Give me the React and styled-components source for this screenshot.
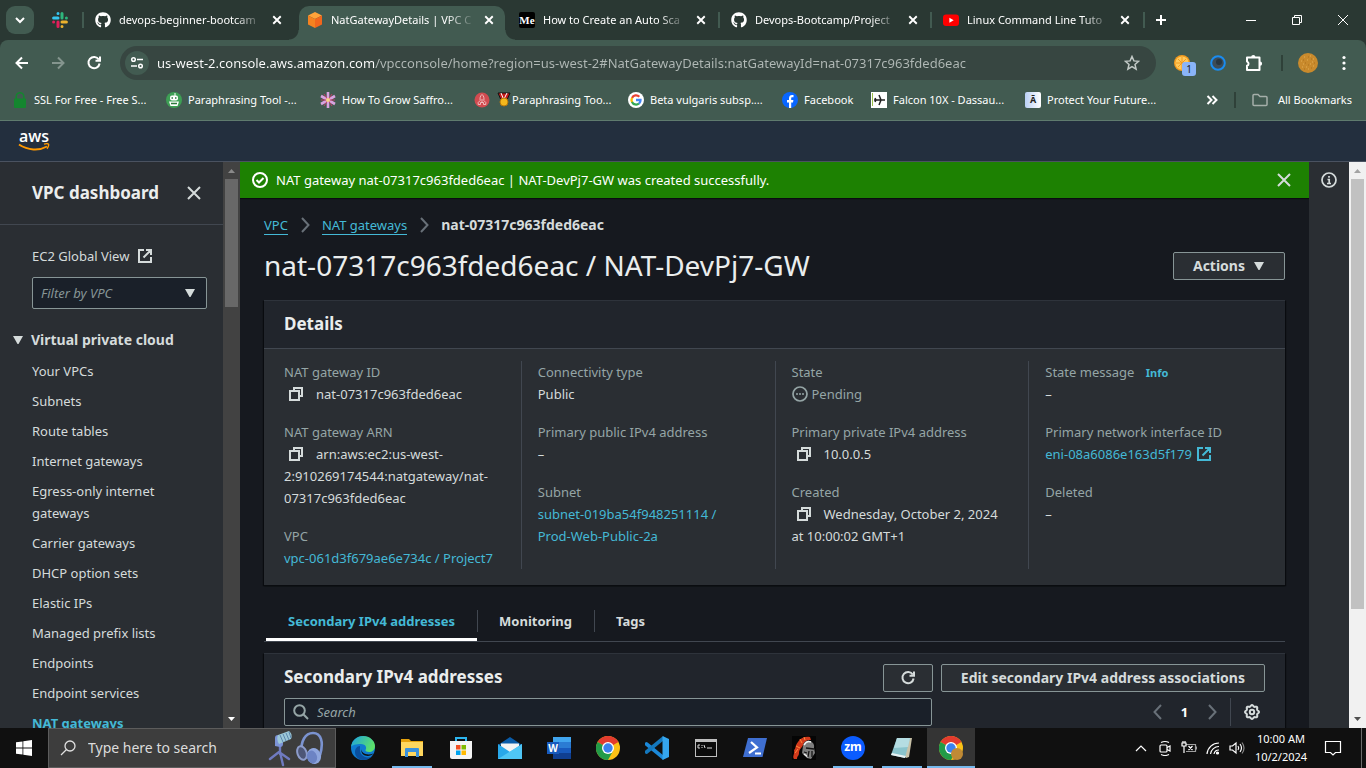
import React from 'react';
import styled, { createGlobalStyle, css } from 'styled-components';
import { FaGithub } from 'react-icons/fa6';

const ui = '"Noto Sans", "Open Sans", sans-serif';
const ember = '"Noto Sans", "Open Sans", sans-serif';

const Global = createGlobalStyle`
  *, *::before, *::after { box-sizing: border-box; }
  body { margin: 0; background: #16191f; font-family: ${ember}; overflow: hidden; }
  button, input, select { font: inherit; color: inherit; margin: 0; }
  button { padding: 0; border: 0; background: none; display: inline-flex; align-items: center; justify-content: center; }
  h1, h2, ul, dl, dd, dt, ol { margin: 0; padding: 0; }
  ul, ol { list-style: none; }
  svg { display: block; flex: none; }
`;

const Screen = styled.div`
  height: 100vh;
  display: flex;
  flex-direction: column;
  overflow: hidden;
`;

/* ---------- browser window ---------- */

const TabStrip = styled.div`
  height: 40px;
  flex: none;
  display: flex;
  align-items: center;
  background: #2a3833;
  color: #fff;
  font: 11px/16px ${ui};
`;

const TabSearch = styled.button`
  width: 28px;
  height: 28px;
  margin: 0 18px 0 6px;
  border-radius: 9px;
  background: #425b51;
`;

const PinnedTab = styled.button`
  width: 16px;
  height: 16px;
  margin-right: 16px;
`;

const Tab = styled.div`
  width: 212px;
  height: 40px;
  flex: none;
  display: flex;
  align-items: center;
  gap: 8px;
  padding: 0 13px 0 11px;
  position: relative;
  z-index: ${p => (p.$active ? 1 : 0)};
  ${p => p.$divided && css`
    &::before {
      content: '';
      position: absolute;
      left: -2px;
      top: 12px;
      width: 2px;
      height: 16px;
      background: #425b51;
    }
  `}
  ${p => p.$active && css`
    &::before {
      content: '';
      position: absolute;
      z-index: -1;
      inset: 6px 3px 0;
      border-radius: 10px 10px 0 0;
      background: #425b51;
    }
    &::after {
      content: '';
      position: absolute;
      z-index: -1;
      left: -7px;
      right: -7px;
      bottom: 0;
      height: 10px;
      background:
        radial-gradient(circle at 0 0, transparent 9px, #425b51 10px) left / 10px 10px no-repeat,
        radial-gradient(circle at 100% 0, transparent 9px, #425b51 10px) right / 10px 10px no-repeat;
    }
  `}
`;

const TabTitle = styled.span`
  flex: 1;
  min-width: 0;
  overflow: hidden;
  white-space: nowrap;
  mask-image: linear-gradient(to right, #000 calc(100% - 28px), transparent);
`;

const TabClose = styled.button`
  width: 12px;
  height: 16px;
`;

const NewTab = styled.button`
  width: 34px;
  height: 28px;
  position: relative;
  &::before {
    content: '';
    position: absolute;
    left: -1px;
    top: 6px;
    width: 2px;
    height: 16px;
    background: #425b51;
  }
`;

const WindowControls = styled.div`
  margin-left: auto;
  display: flex;
  button { width: 46px; height: 40px; }
`;

const ToolbarBack = styled.div`
  flex: none;
  background: #2a3833;
`;

const Toolbar = styled.div`
  height: 46px;
  display: flex;
  align-items: center;
  padding: 0 4px;
  border-radius: 8px 8px 0 0;
  background: #425b51;
  color: #fff;
`;

const ToolButton = styled.button`
  width: 36px;
  height: 34px;
  flex: none;
  position: relative;
  color: ${p => (p.$dim ? '#84958e' : '#fff')};
`;

const AddressBar = styled.label`
  flex: 1;
  height: 34px;
  margin: 0 8px;
  padding: 0 16px 0 5px;
  display: flex;
  align-items: center;
  gap: 8px;
  border-radius: 17px;
  background: #374641;
  > svg { color: #c3cac7; }
`;

const SiteInfo = styled.button`
  width: 24px;
  height: 24px;
  flex: none;
  border-radius: 12px;
  background: #425b51;
`;

const UrlInput = styled.input`
  flex: 1;
  min-width: 0;
  height: 22px;
  padding: 0;
  border: 0;
  outline: 0;
  font: 13px/22px ${ui};
  color: transparent;
  background: linear-gradient(to right, #fff 217px, #b1b9b6 217px);
  background-clip: text;
  -webkit-background-clip: text;
`;

const Count = styled.span`
  position: absolute;
  left: 18px;
  top: 16px;
  width: 14px;
  height: 14px;
  border-radius: 3px;
  background: #8ab4f8;
  color: #1b1b1b;
  font: 10px/14px ${ui};
  text-align: center;
`;

const Divider = styled.span`
  width: 2px;
  height: 16px;
  flex: none;
  margin: ${p => p.$margin || '0'};
  background: #2f4139;
`;

const Bookmarks = styled.nav`
  height: 35px;
  flex: none;
  display: flex;
  align-items: center;
  padding: 0 14px 6px 12px;
  border-bottom: 1px solid #5f7b6e;
  background: #425b51;
  color: #fff;
  font: 11px/16px ${ui};
  white-space: nowrap;
`;

const Bookmark = styled.a`
  display: flex;
  align-items: center;
  gap: ${p => p.$gap ?? 6}px;
  width: ${p => (p.$w ? p.$w + 'px' : 'auto')};
  flex: none;
  color: inherit;
  text-decoration: none;
`;

const MoreButton = styled.button`
  margin-left: auto;
  width: 24px;
  height: 24px;
`;

/* ---------- console ---------- */

const AwsHeader = styled.header`
  height: 41px;
  flex: none;
  display: flex;
  align-items: center;
  padding: 0 18px 2px;
  border-bottom: 1px solid #4a5260;
  background: #232f3e;
`;

const Console = styled.div`
  flex: 1;
  min-height: 0;
  display: flex;
  color: #d5dbdb;
  font: 13px/22px ${ember};
`;

const Sidebar = styled.aside`
  width: 223px;
  flex: none;
  overflow: hidden;
  background: #2a2e33;
`;

const SidebarHeader = styled.div`
  height: 63px;
  display: flex;
  align-items: center;
  justify-content: space-between;
  padding: 0 21px 0 32px;
  border-bottom: 1px solid #414750;
  h2 { font: 700 17px/22px ${ember}; color: #eaeded; }
`;

const SidebarBody = styled.div`
  padding: 20px 16px 0 32px;
`;

const GlobalView = styled.a`
  display: flex;
  align-items: center;
  gap: 8px;
  color: inherit;
  text-decoration: none;
`;

const FilterBox = styled.label`
  display: grid;
  align-items: center;
  margin: 10px 0 20px;
  > * { grid-area: 1 / 1; }
  > svg { justify-self: end; margin-right: 11px; pointer-events: none; }
`;

const FilterSelect = styled.select`
  appearance: none;
  width: 100%;
  height: 32px;
  padding: 0 8px;
  border: 1px solid #879596;
  border-radius: 2px;
  background: #1a2029;
  color: #879596;
  font-style: italic;
`;

const SectionToggle = styled.button`
  margin-left: -20px;
  gap: 7px;
  && { font-size: 14px; font-weight: 700; }
`;

const NavList = styled.ul`
  display: flex;
  flex-direction: column;
  gap: 8px;
  margin-top: 8px;
  max-width: 150px;
`;

const NavLink = styled.a`
  display: block;
  color: ${p => (p.$current ? '#44b9d6' : 'inherit')};
  font-weight: ${p => (p.$current ? 700 : 400)};
  text-decoration: none;
`;

const ScrollTrack = styled.div`
  width: 17px;
  flex: none;
  display: flex;
  flex-direction: column;
  align-items: center;
  background: ${p => (p.$light ? '#f1f1f1' : '#424242')};
  svg { height: 17px; }
`;

const ScrollThumb = styled.div`
  width: 13px;
  flex: 0 1 ${p => p.$share};
  margin-bottom: auto;
  background: ${p => (p.$light ? '#c1c1c1' : '#686868')};
`;

const Main = styled.main`
  flex: 1;
  min-width: 0;
  overflow: hidden;
  background: #16191f;
`;

const Flash = styled.div`
  height: 36px;
  display: flex;
  align-items: center;
  gap: 8px;
  padding: 0 17px 0 12px;
  background: #1d8102;
  color: #fff;
  box-shadow: 0 1px 1px #0a0c10;
  button { margin-left: auto; color: #d5dbdb; }
`;

const Page = styled.div`
  padding: 16px 24px 0;
`;

const Crumbs = styled.ol`
  display: flex;
  align-items: center;
  gap: 9px;
  li { display: flex; align-items: center; gap: 9px; }
  svg { color: #687078; }
  strong { font-size: 14px; font-weight: 700; }
`;

const CrumbLink = styled.a`
  line-height: 18px;
  border-bottom: 1px solid #44b9d6;
  color: #44b9d6;
  text-decoration: none;
`;

const TitleRow = styled.div`
  display: flex;
  align-items: center;
  justify-content: space-between;
  margin: 12px 0 16px;
  h1 { padding-bottom: 2px; font: 400 28px/34px ${ember}; color: #eaeded; }
`;

const Button = styled.button`
  && {
    height: 28px;
    gap: 8px;
    padding: 0 ${p => (p.$icon ? 16 : 19)}px;
    border: 1px solid #879596;
    border-radius: 2px;
    background: #2a2e33;
    font-size: 14px;
    font-weight: 700;
    color: #d5dbdb;
  }
`;

const Card = styled.section`
  border-top: 1px solid #2e333b;
  background: ${p => (p.$plain ? '#21252c' : '#2a2e33')};
  box-shadow: 0 1px 1px #0a0c10, 1px 1px 1px #0a0c10, -1px 1px 1px #0a0c10;
`;

const CardHeader = styled.div`
  height: ${p => (p.$plain ? 44 : 48)}px;
  display: flex;
  align-items: center;
  gap: 8px;
  padding: ${p => (p.$plain ? 4 : 0)}px 20px 0;
  border-bottom: ${p => (p.$plain ? 0 : '1px solid #414750')};
  background: #21252c;
  h2 { margin-right: auto; padding-bottom: 2px; font: 700 17px/22px ${ember}; color: #eaeded; }
`;

const Columns = styled.div`
  display: grid;
  grid-template-columns: repeat(4, 1fr);
  padding: 12px 3px 16px;
`;

const Column = styled.dl`
  display: flex;
  flex-direction: column;
  gap: 16px;
  padding: 0 16px;
  border-left: 1px solid #414750;
  &:first-child { border-left-color: transparent; }
  dt { color: #95a5a6; }
`;

const Copy = styled.button`
  vertical-align: -3px;
  margin: 0 12px 0 4px;
`;

const Link = styled.a`
  color: #44b9d6;
  text-decoration: none;
  svg { display: inline-block; vertical-align: -3px; margin-left: 4px; }
`;

const Unbroken = styled.span`
  white-space: nowrap;
`;

const InfoLink = styled.a`
  margin-left: 8px;
  color: #44b9d6;
  font-size: 11px;
  line-height: 16px;
  font-weight: 700;
  text-decoration: none;
`;

const Status = styled.span`
  display: flex;
  align-items: center;
  gap: 4px;
  color: #95a5a6;
`;

const Tabs = styled.div`
  display: flex;
  margin: 16px 0 11px;
  padding-left: 2px;
  border-bottom: 1px solid #414750;
`;

const PageTab = styled.button`
  && {
    height: 40px;
    position: relative;
    padding: 2px 22px 0;
    font-weight: 700;
    color: ${p => (p.$active ? '#44b9d6' : '#d5dbdb')};
    border-bottom: 3px solid ${p => (p.$active ? '#fff' : 'transparent')};
  }
  &:not(:last-child)::after {
    content: '';
    position: absolute;
    right: -1px;
    top: 9px;
    width: 1px;
    height: 22px;
    background: #414750;
  }
`;

const Filters = styled.div`
  display: flex;
  align-items: center;
  justify-content: space-between;
  padding: 0 12px 20px 20px;
`;

const SearchBox = styled.label`
  width: 66%;
  max-width: 648px;
  height: 28px;
  display: flex;
  align-items: center;
  gap: 8px;
  padding: 0 8px;
  border: 1px solid #879596;
  border-radius: 2px;
  background: #1a2029;
  color: #95a5a6;
  input {
    flex: 1;
    padding: 0;
    border: 0;
    outline: 0;
    background: none;
  }
  input::placeholder { color: #95a5a6; font-style: italic; }
`;

const Pager = styled.div`
  display: flex;
  align-items: center;
  button { width: 27px; height: 28px; color: #687078; }
  button[aria-current] { color: #fff; font-weight: 700; }
  button:last-child { width: 43px; margin-left: 5px; color: #d5dbdb; border-left: 1px solid #414750; }
`;

const HelpRail = styled.aside`
  width: 40px;
  flex: none;
  display: flex;
  justify-content: center;
  padding-top: 10px;
  align-items: flex-start;
  background: #2a2e33;
  color: #d5dbdb;
`;

/* ---------- desktop taskbar ---------- */

const Taskbar = styled.footer`
  height: 40px;
  flex: none;
  display: flex;
  align-items: center;
  background: #101010;
  color: #fff;
`;

const Start = styled.button`
  width: 48px;
  height: 40px;
`;

const TaskSearch = styled.label`
  width: 288px;
  height: 40px;
  flex: none;
  display: flex;
  align-items: center;
  gap: 12px;
  margin-right: 3px;
  padding: 0 11px;
  border: 1px solid #5c5c5c;
  background: #3d3d3d;
  color: #e0e0e0;
  input {
    flex: 1;
    min-width: 0;
    padding: 0;
    border: 0;
    outline: 0;
    background: none;
    font: 14px/20px ${ui};
  }
  input::placeholder { color: #dcdcdc; }
`;

const Doodle = styled.span`
  display: flex;
  align-items: center;
  gap: 2px;
`;

const TaskApp = styled.button`
  width: 48px;
  height: 40px;
  margin-right: 1px;
  flex: none;
  background: ${p => (p.$active ? '#343434' : 'none')};
  position: relative;
  &::after {
    content: '';
    position: absolute;
    left: ${p => (p.$active ? 0 : 4)}px;
    right: ${p => (p.$active ? 0 : 4)}px;
    bottom: 0;
    height: 2px;
    background: ${p => (p.$open ? '#76b9ed' : 'transparent')};
  }
`;

const Tray = styled.div`
  margin-left: auto;
  display: flex;
  align-items: center;
  height: 40px;
  button { width: 24px; height: 40px; flex: none; }
`;

const Clock = styled.time`
  width: 64px;
  text-align: center;
  font: 11px/18px ${ui};
  white-space: nowrap;
`;

const Notify = styled.button`
  && { width: 40px; }
  margin-right: 8px;
`;

const PeekEdge = styled.span`
  width: 5px;
  height: 40px;
  border-left: 1px solid #6b6b6b;
`;

/* ---------- drawings ---------- */

const S = ({ w = 16, h, vb, sw = 2, children, ...r }) => (
  <svg width={w} height={h || w} viewBox={vb || `0 0 ${w} ${h || w}`} fill="none" stroke="currentColor" strokeWidth={sw} aria-hidden="true" {...r}>{children}</svg>
);

const Cross = ({ w = 16, sw = 2 }) => <S w={w} sw={sw} vb="0 0 16 16"><path d="M2 2l12 12M14 2L2 14" /></S>;
const External = () => <S><path d="M9 2h5v5M6.500 9.500L14 2M14 9v5H2V2h5" /></S>;
const CopyIcon = () => <S><path d="M2 5h9v9H2zM6 5V2h8v8h-3" /></S>;
const Caret = () => <S w={12} stroke="none"><path fill="#d5dbdb" d="M1 2h10L6.500 10h-1z" /></S>;
const Angle = ({ left }) => <S><path d={left ? 'M11 1L4.500 8 11 15' : 'M5 1l6.500 7L5 15'} /></S>;
const Magnifier = () => <S><circle cx="6.500" cy="6.500" r="5.300" /><path d="M10.300 10.300L15 15" /></S>;

const gear = (() => {
  let d = '';
  for (let i = 0; i < 96; i++) {
    const a = (i / 96) * Math.PI * 2;
    const r = 6.300 + 0.700 * Math.cos(8 * a);
    d += `${i ? 'L' : 'M'}${(8 + r * Math.cos(a)).toFixed(2)} ${(8 + r * Math.sin(a)).toFixed(2)}`;
  }
  return d + 'Z';
})();
const Gear = () => <S><path d={gear} /><circle cx="8" cy="8" r="2.200" /></S>;

const Arrow = ({ dir }) => (
  <S w={16} sw={2}><path d={dir === 'back' ? 'M14 8H3M8 2.500L2.500 8 8 13.500' : 'M2 8h11M8 2.500L13.500 8 8 13.500'} /></S>
);
const Reload = ({ w = 16 }) => <S w={w} vb="0 0 16 16"><path d="M12.800 4.600A5.600 5.600 0 1 0 13.600 8.500" /><path d="M14 1.500v4.300H9.500" /></S>;

const ScrollArrow = ({ up, color }) => (
  <svg width="9" height="17" viewBox="0 0 9 17" fill={color} aria-hidden="true"><path d={up ? 'M1 11l3.500-4L8 11z' : 'M1 6l3.500 4L8 6z'} /></svg>
);

const Slack = () => (
  <svg width="16" height="16" viewBox="0 0 16 16" strokeWidth="3" strokeLinecap="round" fill="none">
    <path d="M6 1.600v0M6 6H1.600" stroke="#36c5f0" />
    <path d="M10 1.600V6M14.400 6v0" stroke="#2eb67d" />
    <path d="M10 10h4.400M10 14.400v0" stroke="#ecb22e" />
    <path d="M6 10v4.400M1.600 10v0" stroke="#e01e5a" />
  </svg>
);

const AwsCube = () => (
  <svg width="16" height="16" viewBox="0 0 16 16">
    <path d="M8 0l7 3.500L8 7 1 3.500z" fill="#ffa33a" />
    <path d="M1 3.500L8 7v9l-7-3.500z" fill="#f58220" />
    <path d="M15 3.500L8 7v9l7-3.500z" fill="#f2661c" />
  </svg>
);

const MediumMark = styled.span`
  width: 16px;
  height: 16px;
  flex: none;
  border-radius: 2px;
  background: #000;
  font: 700 11px/16px "Liberation Serif", serif;
  text-align: center;
`;

const YouTube = () => (
  <svg width="16" height="16" viewBox="0 0 16 16"><rect y="2.500" width="16" height="11.500" rx="3" fill="#f00" /><path d="M6.400 5.800v5l4.300-2.500z" fill="#fff" /></svg>
);

const Star = () => <S sw={1.5}><path d="M8 1.500l1.900 4.400 4.700.4-3.600 3.100 1.100 4.700L8 11.600l-4.100 2.500L5 9.400 1.400 6.300l4.700-.4z" /></S>;

const Tune = () => <S w={14} sw={1.5}><circle cx="3.500" cy="3.500" r="1.800" /><path d="M7 3.500h6" /><circle cx="10.500" cy="10" r="1.800" /><path d="M1 10h6" /></S>;

const Lemon = () => (
  <svg width="16" height="16" viewBox="0 0 16 16">
    <circle cx="8" cy="8" r="8" fill="#f39a1d" /><circle cx="8" cy="8" r="6.600" fill="#ffc95c" />
    <path d="M8 2v12M2 8h12M4 4l8 8M12 4l-8 8" stroke="#f39a1d" />
  </svg>
);
const Lens = () => <svg width="16" height="16" viewBox="0 0 16 16"><circle cx="8" cy="8" r="6.800" fill="#3c4c58" stroke="#1a8cf0" strokeWidth="2" /><circle cx="9" cy="7" r="3" fill="#283640" /></svg>;
const Puzzle = () => (
  <S w={18} sw={2}>
    <path d="M2 3.500h12.500v12.500H2v-4.200a2.200 2.200 0 0 0 0-4.200z" strokeLinejoin="round" />
    <path d="M6.200 3a2.100 2.100 0 0 1 4.200 0zM15 7.600a2.100 2.100 0 0 1 0 4.200z" fill="currentColor" stroke="none" />
  </S>
);
const Avatar = () => (
  <svg width="20" height="20" viewBox="0 0 20 20"><circle cx="10" cy="10" r="10" fill="#c98a2c" />
    <path d="M3 8h1M6 4h1M9 7h1M12 3h1M15 6h1M5 11h1M8 14h1M12 11h1M15 13h1M10 16h1M4 14h1M14 9h1" stroke="#e3ae55" />
    <path d="M5 7h1M10 4h1M13 6h1M7 10h1M10 12h1M13 15h1M6 16h1M16 10h1" stroke="#a96e1d" /></svg>
);
const Dots = () => <svg width="16" height="16" viewBox="0 0 16 16" fill="#fff"><circle cx="8" cy="2.500" r="1.600" /><circle cx="8" cy="8" r="1.600" /><circle cx="8" cy="13.500" r="1.600" /></svg>;

const Lock = () => (
  <svg width="16" height="16" viewBox="0 0 16 16"><path d="M4.200 8V4.500a3.800 3.800 0 0 1 7.600 0V8" stroke="#14862f" strokeWidth="1.500" fill="none" /><rect x="2" y="6.500" width="12" height="9.500" rx="1" fill="#14862f" /></svg>
);
const Robot = () => (
  <svg width="16" height="16" viewBox="0 0 16 16"><circle cx="8" cy="8" r="8" fill="#3ea055" /><path d="M9 1v3" stroke="#fff" /><rect x="4" y="3.500" width="8" height="5" rx="2" fill="#fff" /><path d="M3 9.500h10l-1.500 4.500h-7z" fill="#fff" /><path d="M5.500 6h1.500M9 6h1.500M5 11.500h6" stroke="#2d7a3e" strokeWidth="1.300" /></svg>
);
const Flower = () => (
  <svg width="16" height="16" viewBox="0 0 16 16"><path d="M8 0v16M1 4l14 8M15 4L1 12" stroke="#d9a3e0" strokeWidth="2.600" /><path d="M4 2l8 12M12 2L4 14M1 8h14" stroke="#c23b63" strokeWidth="1" /><circle cx="8" cy="8" r="2" fill="#f4d58a" /></svg>
);
const Rocket = () => (
  <svg width="22" height="16" viewBox="0 0 22 16"><circle cx="8" cy="8" r="7.500" fill="#d14b50" /><path d="M8 2.500c2 1.500 2.200 4 1.800 6l2 2v2H9.500v-2h-3v2H4.200v-2l2-2c-.4-2-.2-4.500 1.800-6z" fill="none" stroke="#f0bcbc" /><path d="M8 7v4" stroke="#f0bcbc" /></svg>
);
const Medal = () => (
  <svg width="16" height="16" viewBox="0 0 16 16"><path d="M2 1h12l-3 7H5z" fill="#c51a1a" stroke="#111" /><path d="M5 1l2.500 6M11 1L8.500 6" stroke="#fff" /><circle cx="8" cy="10" r="4" fill="#f5b81c" stroke="#b8770a" /></svg>
);
const Google = () => (
  <svg width="16" height="16" viewBox="0 0 16 16" fill="none" strokeWidth="2.300"><circle cx="8" cy="8" r="8" fill="#fff" />
    <path d="M11.300 4.800A4.500 4.500 0 0 0 4 6" stroke="#ea4335" /><path d="M4.100 5.800a4.500 4.500 0 0 0 0 4.500" stroke="#fbbc05" />
    <path d="M4 10a4.500 4.500 0 0 0 7 1.500" stroke="#34a853" /><path d="M11 11.600A4.500 4.500 0 0 0 12.500 8H8" stroke="#4285f4" /></svg>
);
const Facebook = () => (
  <svg width="16" height="16" viewBox="0 0 16 16"><circle cx="8" cy="8" r="8" fill="#0866ff" /><path d="M7 16V10.500H5V8h2V6.300C7 4.200 8.200 3 10.200 3c.6 0 1 .1 1.300.1v2.200h-1.200c-.9 0-1.100.5-1.100 1.200V8h2.200l-.4 2.500H9.200V16z" fill="#fff" /></svg>
);
const Plane = () => (
  <svg width="16" height="16" viewBox="0 0 16 16"><path fill="#fff" d="M0 0h16v16H0z" /><path d="M1 1h1v13H1z" fill="#9bc04a" /><path d="M3 8h11M8 3l2 5-2 5M4 6l1 2-1 2" stroke="#222" strokeWidth="1.500" fill="none" /></svg>
);
const LetterMark = styled.span`
  width: 16px;
  height: 16px;
  border-radius: 2px;
  background: linear-gradient(to right, #b9d0f5, #fff);
  color: #222;
  font: 700 9px/16px ${ui};
  text-align: center;
`;
const Folder = () => <S sw={1.5} stroke="#a5aea9"><path d="M1 3.500q0-1 1-1h4l2 2h6q1 0 1 1v7q0 1-1 1H2q-1 0-1-1z" /></S>;

const AwsWord = styled.a`
  display: block;
  width: 32px;
  color: #fff;
  font: 600 16px/14px "Open Sans", sans-serif;
  text-align: center;
  text-decoration: none;
`;
const AwsLogo = () => (
  <AwsWord href="#">
    aws
    <svg width="32" height="9" viewBox="0 0 32 9" fill="none"><path d="M1 1.500c9 6 20 6.500 28 2" stroke="#f90" strokeWidth="2" /><path d="M26 1.200c2-.6 4-.6 4.500 0s-.2 3-1.500 4.500" stroke="#f90" strokeWidth="1.400" /></svg>
  </AwsWord>
);

const Mic = () => (
  <svg width="28" height="38" viewBox="0 0 28 38">
    <path d="M13 23L4 30M14 23l3 13M13 23l10 7M14 15v10" stroke="#6f7ac0" strokeWidth="2.400" strokeLinecap="round" />
    <path d="M9 17V9q0-3 3-3h5v9q0 3-3 3z" fill="#7c93d6" />
    <path d="M12 6l11-4q4 3 2 8l-12 5q-3-5-1-9z" fill="#9cc8d8" />
    <path d="M14 6l3 7M17 5l3 7M20 4l3 7M23 3l2 6" stroke="#5c86ad" />
  </svg>
);
const Headphones = () => (
  <svg width="28" height="34" viewBox="0 0 28 34" fill="none">
    <path d="M5 22C5 10 9 2 17 2c8 0 11 9 7 22" stroke="#7b93d0" strokeWidth="2.600" />
    <ellipse cx="6" cy="22" rx="4.500" ry="7" fill="#4d5676" stroke="#8d9ccb" strokeWidth="2" transform="rotate(-20 6 22)" />
    <ellipse cx="18" cy="25" rx="7" ry="8" fill="#8ea5dd" transform="rotate(-15 18 25)" /><ellipse cx="16" cy="26" rx="5" ry="6.500" fill="#6c83c4" transform="rotate(-15 16 26)" />
  </svg>
);

const Edge = () => (
  <svg width="24" height="24" viewBox="0 0 24 24">
    <defs><linearGradient id="eg" x1="0" x2="1" y1="0" y2="0.400"><stop offset="0" stopColor="#1ba0e4" /><stop offset="1" stopColor="#5be06a" /></linearGradient></defs>
    <circle cx="12" cy="12" r="12" fill="#0f7bd0" />
    <path d="M0 11C1 4 6 0 12 0c7 0 12 5 12 10 0 4-3 6-6 6-2 0-4-1-3.500-2 1.500-2 .5-6-4.500-6C5 8 1 9 0 11z" fill="url(#eg)" />
    <path d="M9 12c-1 5 3 9.500 8 9.500 2 0 4-1 5-2C20 22 16 24 12 24c-5 0-8-4-8-8 0-3 2-6 5-6z" fill="#0a4f9e" />
    <path d="M10.500 13c-.5 4 5 7 12 4.500-4 4.500-13.500 2.500-12-4.500z" fill="#101010" />
  </svg>
);
const Explorer = () => (
  <svg width="22" height="20" viewBox="0 0 22 20"><path d="M0 1h8l2 2h12v15H0z" fill="#e6a20c" /><path d="M0 4h22v14H0z" fill="#ffd75e" /><path d="M4 19v-8q0-1 1-1h12q1 0 1 1v8h-3v-5H7v5z" fill="#3b92dc" /></svg>
);
const Store = () => (
  <svg width="24" height="24" viewBox="0 0 24 24"><path d="M7 6V2h10v4" fill="none" stroke="#2cb5ee" strokeWidth="2" /><path d="M1 5h22v16q0 2-2 2H3q-2 0-2-2z" fill="#f4f4f4" /><path d="M7 9h4.500v4.500H7z" fill="#f25022" /><path d="M12.500 9H17v4.500h-4.500z" fill="#7fba00" /><path d="M7 14.500h4.500V19H7z" fill="#00a4ef" /><path d="M12.500 14.500H17V19h-4.500z" fill="#ffb900" /></svg>
);
const Mail = () => (
  <svg width="24" height="22" viewBox="0 0 24 22"><path d="M0 8L12 0l12 8z" fill="#0a5ca8" /><path d="M3 6.500h18v9H3z" fill="#f3f3f3" /><path d="M0 7l12 8 12-8v15H0z" fill="#28a8ea" /><path d="M0 22L24 7v15z" fill="#4fc6f5" /></svg>
);
const WordMark = styled.span`
  width: 24px;
  height: 22px;
  display: flex;
  align-items: center;
  background: linear-gradient(#41a5ee 0 25%, #2b7cd3 25% 50%, #185abd 50% 75%, #103f91 75%) right / 18px 22px no-repeat;
  b { width: 12px; height: 12px; background: #185abd; font: 700 10px/12px ${ui}; text-align: center; }
`;
const Chrome = ({ badge }) => (
  <svg width="24" height="24" viewBox="0 0 24 24"><circle cx="12" cy="12" r="12" fill="#fbc116" />
    <path d="M12 12L1.600 6A12 12 0 0 1 22.400 6z" fill="#e33b2e" /><path d="M12 12L1.600 6A12 12 0 0 0 12 24l5-9z" fill="#229b48" />
    <circle cx="12" cy="12" r="6" fill="#fff" /><circle cx="12" cy="12" r="4.700" fill="#3b82ee" />
    {badge && <circle cx="18" cy="18" r="6" fill="#c08a35" />}</svg>
);
const VsCode = () => (
  <svg width="24" height="24" viewBox="0 0 24 24" fill="none">
    <path d="M1.500 8L18 21.500" stroke="#1b88d8" strokeWidth="3.600" strokeLinecap="round" />
    <path d="M1.500 16L18 2.500" stroke="#1478bd" strokeWidth="3.600" strokeLinecap="round" />
    <path d="M17.500 0L24 3v18l-6.500 3z" fill="#35a6ee" />
  </svg>
);
const Terminal = () => (
  <svg width="22" height="18" viewBox="0 0 22 18"><path d="M0 0h22v18H0z" fill="#bfbfbf" /><path d="M1 3h20v14H1z" fill="#0b0b0b" /><path d="M3 6h2M3 6v3h2M7 6v1M7 8v1M9 6l1 3M12 9h5" stroke="#ddd" fill="none" /></svg>
);
const PowerShell = () => (
  <svg width="24" height="20" viewBox="0 0 24 20"><path d="M5 0h19l-4.500 19H0z" fill="#3f6fd1" /><path d="M8 4l6 5.500L6 15M12 15.500h6" stroke="#fff" strokeWidth="2.200" fill="none" /></svg>
);
const Knight = () => (
  <svg width="24" height="24" viewBox="0 0 24 24">
    <path fill="#050505" d="M0 0h24v24H0z" />
    <path d="M2 23c-2-3 1-5 0-9 2-1 1-5 4-8 2-4 7-6 12-5l1 3c-5 0-7 2-8 5-1 3-4 4-4 8 0 3-2 3-2 6z" fill="#d33a1c" />
    <path d="M3 17l3-4M4 10l4 2M8 3l2 4M12 1l1 3" stroke="#ff8a3c" />
    <path d="M11 10q1-6 7-5 5 2 4 7l1 5-4 6-4-1-5-5z" fill="#7d7d7d" />
    <path d="M12 9q3-5 7-3M12 18l4 3" stroke="#f2f2f2" strokeWidth="1.500" fill="none" />
    <path d="M14 12l8 1M17 15l-1 6M20 15v6M12 16l3 1" stroke="#151515" strokeWidth="1.300" />
  </svg>
);
const ZoomMark = styled.span`
  width: 24px;
  height: 24px;
  border-radius: 12px;
  background: #0b5cff;
  font: 700 12px/22px ${ui};
  text-align: center;
`;
const Notepad = () => (
  <svg width="24" height="24" viewBox="0 0 24 24"><path d="M8 2h14l-3 19-3 1z" fill="#c9c2a8" /><path d="M7 2h13l-5 20-14-3z" fill="#8ac4cc" /><path d="M7 2h13l-2 9L4 12z" fill="#b5dde2" /><path d="M1 19l14 3 1-2-14-3z" fill="#e9f2f3" /></svg>
);
const Windows = () => <svg width="16" height="16" viewBox="0 0 16 16" fill="#fff"><path d="M0 2.300l6.500-.9v6.100H0zM7.300 1.300L16 0v7.500H7.300zM0 8.400h6.500v6.200L0 13.700zM7.300 8.400H16V16l-8.700-1.300z" /></svg>;

/* ---------- data ---------- */

const browserTabs = [
  { title: 'devops-beginner-bootcam', icon: <FaGithub size={16} />, divided: true },
  { title: 'NatGatewayDetails | VPC C', icon: <AwsCube />, active: true },
  { title: 'How to Create an Auto Sca', icon: <MediumMark>Me</MediumMark> },
  { title: 'Devops-Bootcamp/Project', icon: <FaGithub size={16} />, divided: true },
  { title: 'Linux Command Line Tuto', icon: <YouTube />, divided: true },
];

const bookmarks = [
  { label: 'SSL For Free - Free S...', icon: <Lock />, w: 154 },
  { label: 'Paraphrasing Tool -...', icon: <Robot />, w: 154 },
  { label: 'How To Grow Saffro...', icon: <Flower />, w: 154 },
  { label: 'Paraphrasing Too...', icon: <><Rocket /><Medal /></>, w: 154, gap: 0 },
  { label: 'Beta vulgaris subsp....', icon: <Google />, w: 154 },
  { label: 'Facebook', icon: <Facebook />, w: 89 },
  { label: 'Falcon 10X - Dassau...', icon: <Plane />, w: 154 },
  { label: 'Protect Your Future...', icon: <LetterMark>Ā</LetterMark>, w: 154 },
];

const navItems = [
  'Your VPCs', 'Subnets', 'Route tables', 'Internet gateways', 'Egress-only internet gateways',
  'Carrier gateways', 'DHCP option sets', 'Elastic IPs', 'Managed prefix lists', 'Endpoints',
  'Endpoint services', 'NAT gateways',
];

const copy = <Copy aria-label="Copy"><CopyIcon /></Copy>;

const detailColumns = [
  [
    ['NAT gateway ID', <>{copy}nat-07317c963fded6eac</>],
    ['NAT gateway ARN', <>{copy}arn:aws:ec2:us-west-<wbr />2:910269174544:natgateway/nat-07317c963fded6eac</>],
    ['VPC', <Link href="#">vpc-061d3f679ae6e734c / Project7</Link>],
  ],
  [
    ['Connectivity type', 'Public'],
    ['Primary public IPv4 address', '–'],
    ['Subnet', <Link href="#">subnet-019ba54f948251114 / <Unbroken>Prod-Web-Public-2a</Unbroken></Link>],
  ],
  [
    ['State', <Status><S sw={1.7}><circle cx="8" cy="8" r="7" /><path d="M4 8h2M7 8h2M10 8h2" /></S>Pending</Status>],
    ['Primary private IPv4 address', <>{copy}10.0.0.5</>],
    ['Created', <>{copy}Wednesday, October 2, 2024 at 10:00:02 GMT+1</>],
  ],
  [
    [<>State message <InfoLink href="#">Info</InfoLink></>, '–'],
    ['Primary network interface ID', <Link href="#">eni-08a6086e163d5f179<External /></Link>],
    ['Deleted', '–'],
  ],
];

const apps = [
  { name: 'Edge', icon: <Edge /> },
  { name: 'File Explorer', icon: <Explorer />, open: true },
  { name: 'Store', icon: <Store /> },
  { name: 'Mail', icon: <Mail /> },
  { name: 'Word', icon: <WordMark><b>W</b></WordMark> },
  { name: 'Chrome', icon: <Chrome /> },
  { name: 'Code', icon: <VsCode /> },
  { name: 'Terminal', icon: <Terminal /> },
  { name: 'PowerShell', icon: <PowerShell /> },
  { name: 'Knight', icon: <Knight /> },
  { name: 'Zoom', icon: <ZoomMark>zm</ZoomMark>, open: true },
  { name: 'Notepad', icon: <Notepad />, open: true },
  { name: 'Chrome profile', icon: <Chrome badge />, open: true, active: true },
];

/* ---------- page ---------- */

export default function App() {
  return (
    <Screen>
      <Global />
      <TabStrip>
        <TabSearch aria-label="Search tabs"><S w={12}><path d="M2 4l4 4 4-4" /></S></TabSearch>
        <PinnedTab aria-label="Slack"><Slack /></PinnedTab>
        {browserTabs.map(t => (
          <Tab key={t.title} $active={t.active} $divided={t.divided}>
            {t.icon}
            <TabTitle>{t.title}</TabTitle>
            <TabClose aria-label="Close tab"><Cross w={10} sw={3} /></TabClose>
          </Tab>
        ))}
        <NewTab aria-label="New tab"><S w={12}><path d="M6 1v10M1 6h10" /></S></NewTab>
        <WindowControls>
          <button aria-label="Minimize"><S w={10} sw={1}><path d="M0 5.500h10" /></S></button>
          <button aria-label="Restore"><S w={10} sw={1}><path d="M0.500 2.500h7v7h-7zM2.500 2.500v-2h7v7h-2" /></S></button>
          <button aria-label="Close"><S w={10} sw={1}><path d="M0 0l10 10M10 0L0 10" /></S></button>
        </WindowControls>
      </TabStrip>
      <ToolbarBack>
        <Toolbar>
          <ToolButton aria-label="Back"><Arrow dir="back" /></ToolButton>
          <ToolButton aria-label="Forward" $dim><Arrow /></ToolButton>
          <ToolButton aria-label="Reload"><Reload /></ToolButton>
          <AddressBar>
            <SiteInfo aria-label="Site information"><Tune /></SiteInfo>
            <UrlInput aria-label="Address" defaultValue="us-west-2.console.aws.amazon.com/vpcconsole/home?region=us-west-2#NatGatewayDetails:natGatewayId=nat-07317c963fded6eac" />
            <Star />
          </AddressBar>
          <ToolButton aria-label="Extension, 1 notice"><Lemon /><Count>1</Count></ToolButton>
          <ToolButton aria-label="Lens"><Lens /></ToolButton>
          <ToolButton aria-label="Extensions"><Puzzle /></ToolButton>
          <Divider $margin="0 7px 0 9px" />
          <ToolButton aria-label="Profile"><Avatar /></ToolButton>
          <ToolButton aria-label="Menu"><Dots /></ToolButton>
        </Toolbar>
      </ToolbarBack>
      <Bookmarks>
        {bookmarks.map(b => (
          <Bookmark key={b.label} href="#" $w={b.w} $gap={b.gap}>{b.icon}{b.label}</Bookmark>
        ))}
        <MoreButton aria-label="More bookmarks"><S w={12} sw={2}><path d="M1.500 2l4 4-4 4M6.500 2l4 4-4 4" /></S></MoreButton>
        <Divider $margin="0 16px 0 10px" />
        <Bookmark href="#" $gap={10}><Folder />All Bookmarks</Bookmark>
      </Bookmarks>

      <AwsHeader><AwsLogo /></AwsHeader>
      <Console>
        <Sidebar>
          <SidebarHeader><h2>VPC dashboard</h2><button aria-label="Close navigation"><Cross /></button></SidebarHeader>
          <SidebarBody>
            <GlobalView href="#">EC2 Global View<External /></GlobalView>
            <FilterBox>
              <FilterSelect aria-label="Filter by VPC"><option>Filter by VPC</option></FilterSelect>
              <Caret />
            </FilterBox>
            <SectionToggle><Caret />Virtual private cloud</SectionToggle>
            <NavList>
              {navItems.map(n => <li key={n}><NavLink href="#" $current={n === 'NAT gateways'}>{n}</NavLink></li>)}
            </NavList>
          </SidebarBody>
        </Sidebar>
        <ScrollTrack>
          <ScrollArrow up color="#8a8a8a" />
          <ScrollThumb $share="128px" />
          <ScrollArrow color="#fff" />
        </ScrollTrack>
        <Main>
          <Flash role="status">
            <S><circle cx="8" cy="8" r="7" /><path d="M4.500 8l2.500 2.500 4.500-4.500" /></S>
            NAT gateway nat-07317c963fded6eac | NAT-DevPj7-GW was created successfully.
            <button aria-label="Dismiss"><Cross /></button>
          </Flash>
          <Page>
            <Crumbs>
              <li><CrumbLink href="#">VPC</CrumbLink><Angle /></li>
              <li><CrumbLink href="#">NAT gateways</CrumbLink><Angle /></li>
              <li><strong>nat-07317c963fded6eac</strong></li>
            </Crumbs>
            <TitleRow>
              <h1>nat-07317c963fded6eac / NAT-DevPj7-GW</h1>
              <Button>Actions<Caret /></Button>
            </TitleRow>
            <Card>
              <CardHeader><h2>Details</h2></CardHeader>
              <Columns>
                {detailColumns.map((col, i) => (
                  <Column key={i}>
                    {col.map(([label, value], j) => <div key={j}><dt>{label}</dt><dd>{value}</dd></div>)}
                  </Column>
                ))}
              </Columns>
            </Card>
            <Tabs role="tablist">
              <PageTab role="tab" aria-selected="true" $active>Secondary IPv4 addresses</PageTab>
              <PageTab role="tab">Monitoring</PageTab>
              <PageTab role="tab">Tags</PageTab>
            </Tabs>
            <Card $plain>
              <CardHeader $plain>
                <h2>Secondary IPv4 addresses</h2>
                <Button $icon aria-label="Refresh"><Reload /></Button>
                <Button>Edit secondary IPv4 address associations</Button>
              </CardHeader>
              <Filters>
                <SearchBox><Magnifier /><input aria-label="Search" placeholder="Search" /></SearchBox>
                <Pager>
                  <button aria-label="Previous page"><Angle left /></button>
                  <button aria-current="page">1</button>
                  <button aria-label="Next page"><Angle /></button>
                  <button aria-label="Preferences"><Gear /></button>
                </Pager>
              </Filters>
            </Card>
          </Page>
        </Main>
        <HelpRail>
          <button aria-label="Info"><S sw={1.7}><circle cx="8" cy="8" r="7" /><path d="M8 4v1.800M6.500 7.500h1.700v4M6 11.500h4" /></S></button>
        </HelpRail>
        <ScrollTrack $light>
          <ScrollArrow up color="#a3a3a3" />
          <ScrollThumb $light $share="430px" />
          <ScrollArrow color="#505050" />
        </ScrollTrack>
      </Console>

      <Taskbar>
        <Start aria-label="Start"><Windows /></Start>
        <TaskSearch>
          <S sw={1.3}><circle cx="10" cy="6" r="5" /><path d="M6.500 9.500L1 15" /></S>
          <input aria-label="Type here to search" placeholder="Type here to search" />
          <Doodle><Mic /><Headphones /></Doodle>
        </TaskSearch>
        {apps.map(a => <TaskApp key={a.name} aria-label={a.name} $open={a.open} $active={a.active}>{a.icon}</TaskApp>)}
        <Tray>
          <button aria-label="Hidden icons"><S w={12} sw={1.2}><path d="M1 9l5-5 5 5" /></S></button>
          <button aria-label="Meet now"><S sw={1.2}><rect x="3" y="5" width="7" height="7" rx="1" /><path d="M10 7.500l3-1.500v5l-3-1.500M4 2.500q4-2 8 0M4 14.500q4 2 8 0" /></S></button>
          <button aria-label="Battery"><S sw={1.2}><path d="M5 4.500h9.500v7H5M14.500 7h1.200v2.500" opacity=".6" /><path d="M7.500 6l4 4M11.500 6l-4 4M1 3h4v3H1zM3 6v7M2 1v2M4 1v2" /></S></button>
          <button aria-label="Network"><S w={14} sw={1.2}><path d="M1 13A12 12 0 0 1 13 2M4.500 13A8.500 8.500 0 0 1 13 5.500M8 13a5 5 0 0 1 5-4" /><circle cx="11.500" cy="12" r="1" fill="currentColor" /></S></button>
          <button aria-label="Volume"><S sw={1.2}><path d="M1 6h2.500L7 3v10L3.500 10H1zM9 6q1.500 2 0 4M11 4q3 4 0 8" /><path d="M13 2.500q4 5.500 0 11" opacity=".5" /></S></button>
          <Clock>10:00 AM<br />10/2/2024</Clock>
          <Notify aria-label="Notifications"><S w={18} sw={1.2}><path d="M1.500 2.500h15v11h-5L9 16l-2.500-2.500h-5z" /></S></Notify>
          <PeekEdge />
        </Tray>
      </Taskbar>
    </Screen>
  );
}
